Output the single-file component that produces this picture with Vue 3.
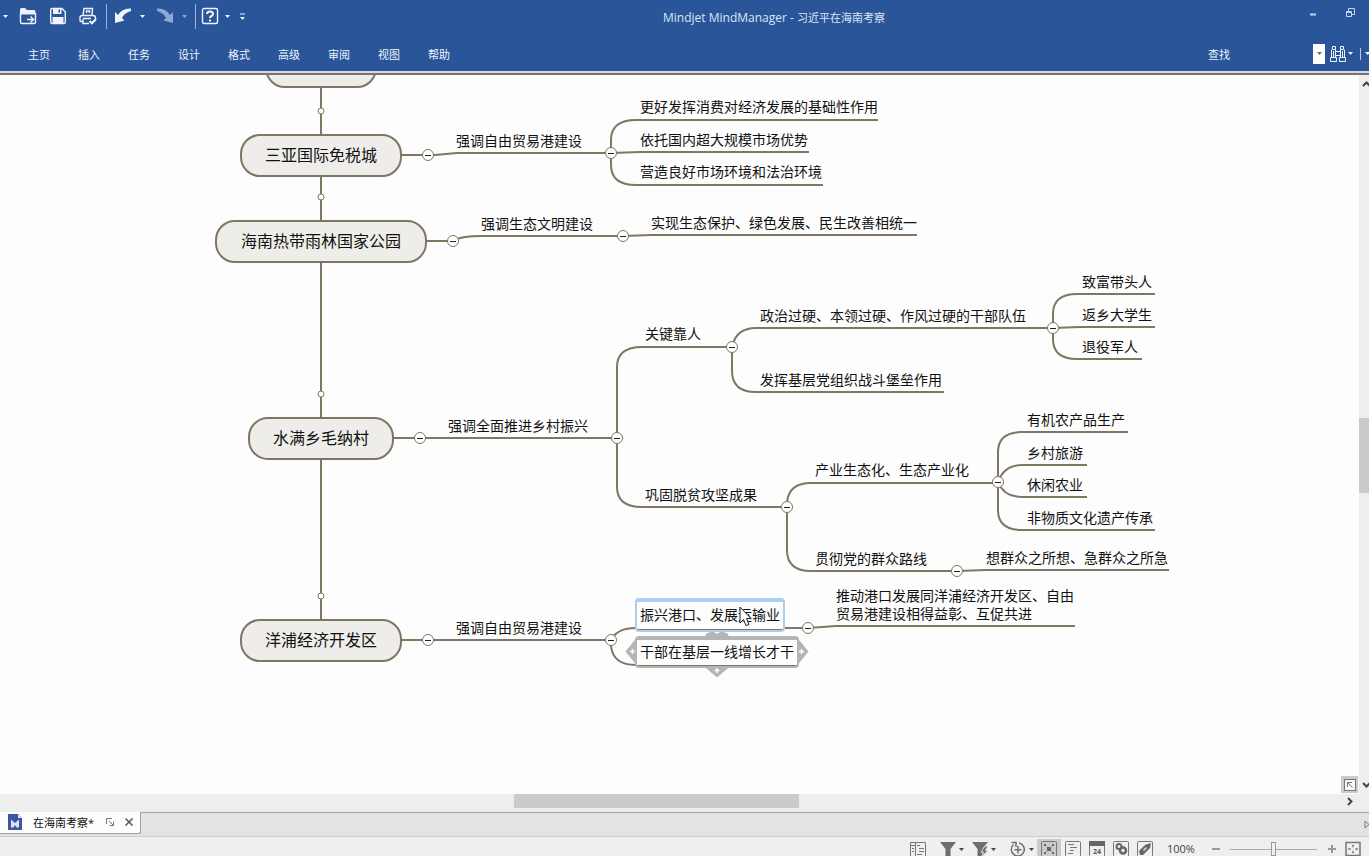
<script setup>
import { ref } from 'vue'

const zoom = ref(55)
const query = ref('')
const menus = ['主页', '插入', '任务', '设计', '格式', '高级', '审阅', '视图', '帮助']

/* Map coordinates; the board is scrolled down by originY. */
const originY = 75

const mains = [
  { text: '', x: 265, y: 45, w: 112 },
  { text: '三亚国际免税城', x: 240, y: 134, w: 162 },
  { text: '海南热带雨林国家公园', x: 215, y: 220, w: 212 },
  { text: '水满乡毛纳村', x: 248, y: 417, w: 146 },
  { text: '洋浦经济开发区', x: 240, y: 619, w: 162 }
]

/* y is the vertical centre of the topic's first line. */
const topics = [
  { text: '强调自由贸易港建设', x: 456, y: 141 },
  { text: '更好发挥消费对经济发展的基础性作用', x: 640, y: 107 },
  { text: '依托国内超大规模市场优势', x: 640, y: 140 },
  { text: '营造良好市场环境和法治环境', x: 640, y: 172 },
  { text: '强调生态文明建设', x: 481, y: 224 },
  { text: '实现生态保护、绿色发展、民生改善相统一', x: 651, y: 223 },
  { text: '强调全面推进乡村振兴', x: 448, y: 426 },
  { text: '关键靠人', x: 645, y: 334 },
  { text: '政治过硬、本领过硬、作风过硬的干部队伍', x: 760, y: 316 },
  { text: '致富带头人', x: 1082, y: 282 },
  { text: '返乡大学生', x: 1082, y: 315 },
  { text: '退役军人', x: 1082, y: 347 },
  { text: '发挥基层党组织战斗堡垒作用', x: 760, y: 380 },
  { text: '巩固脱贫攻坚成果', x: 645, y: 495 },
  { text: '产业生态化、生态产业化', x: 815, y: 470 },
  { text: '有机农产品生产', x: 1027, y: 420 },
  { text: '乡村旅游', x: 1027, y: 453 },
  { text: '休闲农业', x: 1027, y: 485 },
  { text: '非物质文化遗产传承', x: 1027, y: 518 },
  { text: '贯彻党的群众路线', x: 815, y: 559 },
  { text: '想群众之所想、急群众之所急', x: 986, y: 558 },
  { text: '强调自由贸易港建设', x: 456, y: 628 },
  { text: '推动港口发展同洋浦经济开发区、自由\n贸易港建设相得益彰、互促共进', x: 836, y: 596 }
]

const links = [
  'M321 87V134M321 177V220M321 263V417M321 460V619',
  'M402 155H435L457 153H611',
  'M611 153V140Q611 120 636 120H878',
  'M611 153L640 152H809',
  'M611 153V165Q611 185 636 185H823',
  'M427 241H453Q460 236 482 236H623',
  'M623 236L652 235H917',
  'M394 438H617',
  'M617 438V367Q617 347 642 347H732',
  'M617 438V487Q617 507 642 507H787',
  'M732 347Q736 328 756 328H1053',
  'M732 347V371Q732 392 756 392H944',
  'M1053 328V314Q1053 294 1077 294H1155',
  'M1053 328L1080 327H1155',
  'M1053 328V339Q1053 359 1077 359H1142',
  'M787 507V502Q789 483 811 483H998',
  'M787 507V550Q787 571 811 571H957',
  'M998 482V452Q998 432 1022 432H1128',
  'M998 482Q1004 465 1022 465H1087',
  'M998 482Q1004 497 1022 497H1087',
  'M998 482V510Q998 530 1022 530H1155',
  'M957 571L986 570H1169',
  'M402 640H611',
  'M611 640Q617 628 636 628H808',
  'M611 640V646Q613 665 636 665H640',
  'M808 628L836 626H1075'
]

const dots = [111, 197, 394, 596]

const toggles = [
  [428, 155], [611, 153], [453, 241], [623, 236], [420, 438], [617, 438], [732, 347],
  [1053, 328], [787, 507], [998, 482], [957, 571], [428, 640], [611, 640], [808, 628]
]

const vThumb = { top: '47.7%', height: '10.4%' }
const hThumb = { left: '37.55%', width: '20.8%' }
</script>

<template>
  <div class="app">
    <header class="header">
      <div class="title-row">
        <div class="quick">
          <button class="car first" aria-label="更多"><svg width="5" height="3"><path d="M0 0H5L2.500 3Z" fill="currentColor" /></svg></button>
          <button class="tool" aria-label="打开">
            <svg width="18" height="18" viewBox="0 0 18 18"><path d="M1 2.500Q1 1 2.500 1H6L8 3H15Q16.500 3 16.500 5V7.500H1Z" fill="currentColor" /><path d="M1.500 6V15Q1.500 16.500 3 16.500H15Q16.500 16.500 16.500 15V6M8 12.500H14M11.500 9.500L14.500 12.500L11.500 15.500" fill="none" stroke="currentColor" stroke-width="1.400" /></svg>
          </button>
          <button class="tool" aria-label="保存">
            <svg width="18" height="18" viewBox="0 0 18 18"><path d="M1.700 3Q1.700 1.500 3 1.500H13L16.300 5V15Q16.300 16.500 15 16.500H3Q1.700 16.500 1.700 15Z" fill="none" stroke="currentColor" stroke-width="1.400" /><path d="M4 1H12.500V7H4ZM3.500 10H14.500V16H3.500Z" fill="currentColor" /><path d="M9.500 2.500H11V5.500H9.500Z" fill="#2a5699" /></svg>
          </button>
          <button class="tool" aria-label="打印">
            <svg width="18" height="18" viewBox="0 0 18 18" fill="none" stroke="currentColor" stroke-width="1.400"><path d="M4 8L5 1.500H13.500L13 8M7.500 6V4H10.500V6M3.500 8.500H14Q16.500 8.500 16.500 11V12M3.500 14.500H2Q1 14.500 1 13V10.500Q1 8.500 3.500 8.500M4 11.500H12M4 12V16.500H10" /><path d="M10.500 14L13 16.300L17 12" stroke-width="2" /></svg>
          </button>
          <span class="bar"></span>
          <button class="tool" aria-label="撤消">
            <svg width="18" height="18" viewBox="0 0 18 18"><path d="M1 5L1 16L10.500 13.500L8 11Q10 6 17 4V1.500Q8 1 4 8Z" fill="currentColor" /></svg>
          </button>
          <button class="car" aria-label="撤消列表"><svg width="5" height="3"><path d="M0 0H5L2.500 3Z" fill="currentColor" /></svg></button>
          <button class="tool dim" aria-label="重做">
            <svg width="18" height="18" viewBox="0 0 18 18"><path d="M17 5V16L7.500 13.500L10 11Q8 6 1 4V1.500Q10 1 14 8Z" fill="currentColor" /></svg>
          </button>
          <button class="car dim" aria-label="重做列表"><svg width="5" height="3"><path d="M0 0H5L2.500 3Z" fill="currentColor" /></svg></button>
          <span class="bar"></span>
          <button class="tool help" aria-label="帮助">
            <svg width="18" height="18" viewBox="0 0 18 18" fill="none" stroke="currentColor"><rect x="1.500" y="1.500" width="15" height="15" rx="1.500" stroke-width="1.400" /><path d="M6 7Q6 4.500 9 4.500T12 7Q12 8.500 10.500 9T9 11M9 12.500V14.500" stroke-width="2" /></svg>
          </button>
          <button class="car near" aria-label="帮助列表"><svg width="5" height="3"><path d="M0 0H5L2.500 3Z" fill="currentColor" /></svg></button>
          <button class="car custom" aria-label="自定义工具栏"><svg width="5" height="7"><path d="M0 1H5" stroke="currentColor" /><path d="M0 4H5L2.500 7Z" fill="currentColor" /></svg></button>
        </div>
        <h1 class="title"><span class="product">Mindjet MindManager - </span>习近平在海南考察</h1>
        <div class="window-controls">
          <button aria-label="最小化"><svg width="9" height="9"><path d="M1 6.500H7" stroke="currentColor" stroke-width="2" /></svg></button>
          <button aria-label="还原"><svg width="9" height="9" fill="none" stroke="currentColor"><path d="M.5 3.500H5.500V8.500H.5ZM2.500 3V.5H8.500V6.500H6M.5 4.500H5.500" /></svg></button>
        </div>
      </div>
      <div class="menu-row">
        <nav class="menus">
          <button v-for="m in menus" :key="m">{{ m }}</button>
        </nav>
        <div class="search">
          <label for="find">查找</label>
          <input id="find" v-model="query" type="text">
          <button class="drop" aria-label="查找历史"><svg width="5" height="3"><path d="M0 0H5L2.500 3Z" fill="#6b6b6b" /></svg></button>
          <button class="binoculars" aria-label="开始查找">
            <svg width="16" height="18" viewBox="0 0 16 18" fill="none" stroke="currentColor"><path d="M2.500 1.500H5.500V4.500H2.500ZM10.500 1.500H13.500V4.500H10.500ZM1.500 4.500V12.500M5.500 4.500V12.500M10.500 4.500V12.500M14.500 4.500V12.500M.5 12.500H6.500V16.500H.5ZM9.500 12.500H15.500V16.500H9.500ZM5.500 6.500H10.500M5.500 10.500H10.500M3.500 6V12M12.500 6V12" /></svg>
          </button>
          <button class="car" aria-label="查找选项"><svg width="5" height="3"><path d="M0 0H5L2.500 3Z" fill="currentColor" /></svg></button>
          <span class="small-bar"></span>
          <button class="car" aria-label="更多选项"><svg width="5" height="3"><path d="M0 0H5L2.500 3Z" fill="currentColor" /></svg></button>
        </div>
      </div>
    </header>

    <main class="work">
      <section class="board" aria-label="思维导图">
        <svg class="links" width="100%" height="100%">
          <g :transform="`translate(0 ${-originY})`">
            <path v-for="d in links" :key="d" :d="d" />
            <circle v-for="y in dots" :key="y" cx="321" :cy="y" r="3" />
          </g>
        </svg>
        <div v-for="m in mains" :key="m.x + '-' + m.y" class="main-topic" :style="{ left: m.x + 'px', top: m.y - originY + 'px', width: m.w + 'px' }">{{ m.text }}</div>
        <div v-for="t in topics" :key="t.x + '-' + t.y" class="topic" :style="{ left: t.x + 'px', top: t.y - 9 - originY + 'px' }">{{ t.text }}</div>
        <button v-for="t in toggles" :key="t[0] + '-' + t[1]" class="toggle" aria-label="折叠" :style="{ left: t[0] - 6 + 'px', top: t[1] - 6 - originY + 'px' }"></button>

        <svg class="handles" width="184" height="52" viewBox="0 0 184 52">
          <path d="M1 25.500L12 12V39ZM183 25.500L172 12V39ZM92 51L78 39H106Z" fill="#b5b5b5" stroke="#b5b5b5" stroke-linejoin="round" />
          <path d="M80 12Q80 6 87 6H89Q92 9 95 6H97Q104 6 104 12Z" fill="#b5b5b5" />
          <path d="M5 25.500H10M7.500 23V28M174 25.500H179M176.500 23V28M89.500 44.500H94.500M92 42V47" stroke="#fff" stroke-width="1.500" />
        </svg>
        <div class="picked hover">振兴港口、发展运输业</div>
        <div class="picked current">干部在基层一线增长才干</div>
        <svg class="pointer" width="13" height="21" viewBox="0 0 13 21"><path d="M1 1V17L4.500 13.500L7 19.500L10 18.500L7.500 12.500H12Z" fill="#fff" stroke="#222" /></svg>
        <button class="overview" aria-label="概览">
          <svg width="12" height="12" fill="none" stroke="#777"><rect x=".5" y=".5" width="11" height="11" /><path d="M3.500 8V3.500H8M3.500 3.500L8.500 8.500" /></svg>
        </button>
      </section>
      <div class="vscroll">
        <div class="vthumb" :style="vThumb"></div>
        <button class="up" aria-label="向上"><svg width="8" height="6"><path d="M1 5L4.500 1.500L8 5" /></svg></button>
        <button class="down" aria-label="向下"><svg width="8" height="6"><path d="M1 1L4.500 4.500L8 1" /></svg></button>
      </div>
    </main>

    <div class="hscroll">
      <div class="hthumb" :style="hThumb"></div>
      <button aria-label="向右"><svg width="6" height="9"><path d="M1 1L4.500 4.500L1 8" /></svg></button>
    </div>

    <div class="tabs">
      <div class="tab">
        <svg width="14" height="16" viewBox="0 0 14 16"><path d="M0 0H10L14 4V16H0Z" fill="#3c55a5" /><path d="M10 0L14 4H10Z" fill="#dfe5f5" /><path d="M3 13.500V5.500L7 9L11 5.500V13.500H8.500L7 11L5.500 13.500Z" fill="#dce4f3" /></svg>
        <span class="name">在海南考察*</span>
        <button aria-label="弹出窗口"><svg width="8" height="8" fill="none" stroke="#777"><path d="M.5 6V.5H6M3 3L7 7M7.500 3.500V7.500H3.500" /></svg></button>
        <button aria-label="关闭"><svg width="8" height="8" stroke="#555" stroke-width="1.500"><path d="M.5 .5L7.500 7.500M7.500 .5L.5 7.500" /></svg></button>
      </div>
      <button class="next" aria-label="下一个标签"><svg width="5" height="9" fill="none" stroke="#777"><path d="M1 1L5 4.500L1 8Z" /></svg></button>
    </div>

    <footer class="status">
      <div class="items">
        <button aria-label="大纲"><svg width="16" height="16" fill="none" stroke="#777"><path d="M.5 1.500H15.500V15.500H.5ZM5.500 1V15.500M1 4.500H5M2 7.500H4M2 10.500H4M7 4.500H10M9 7.500H14M9 10.500H14M7 13.500H12" /></svg></button>
        <button class="split gap-l" aria-label="筛选">
          <svg width="16" height="16"><path d="M0 1H16L10.500 8V16H5.500V8Z" fill="#6e6e6e" /></svg><svg width="5" height="3"><path d="M0 0H5L2.500 3Z" fill="#444" /></svg>
        </button>
        <button class="split gap-m" aria-label="快速筛选">
          <svg width="16" height="16"><path d="M0 1H16L11 7L10.500 16H5.500V8Z" fill="#6e6e6e" /><path d="M13 5L9 11H11.500L9.500 16L16 9.500H13.500L16 5Z" fill="#6e6e6e" stroke="#efefef" stroke-width=".8" /></svg><svg width="5" height="3"><path d="M0 0H5L2.500 3Z" fill="#444" /></svg>
        </button>
        <button class="split gap-l" aria-label="添加">
          <svg width="16" height="16" fill="none" stroke="#6e6e6e"><path d="M3.500 3.500A6.500 6.500 0 1 0 9 2M8 5V12.500M4.500 8.800H11.500" stroke-width="1.500" /><path d="M1.500 1.500H6V6" stroke-width="1.500" /></svg><svg width="5" height="3"><path d="M0 0H5L2.500 3Z" fill="#444" /></svg>
        </button>
        <div class="views">
          <button class="active" aria-label="导图视图"><svg width="16" height="16" fill="none" stroke="#777"><rect x=".5" y=".5" width="15" height="15" rx="1" /><path d="M6 6H10V10H6ZM3 3H5V5H3ZM11 3H13V5H11ZM3 11H5V13H3ZM11 11H13V13H11Z" fill="#666" stroke="none" /><path d="M4 4L6 6M12 4L10 6M4 12L6 10M12 12L10 10" stroke-dasharray="1 1" /></svg></button>
          <button aria-label="大纲视图"><svg width="16" height="16" fill="none" stroke="#777"><rect x=".5" y=".5" width="15" height="15" rx="1" /><path d="M3 3.500H9M5 6.500H12M5 9.500H9M3 12.500H8" /></svg></button>
          <button aria-label="日程视图"><svg width="16" height="16" fill="none"><rect x=".5" y=".5" width="15" height="15" rx="1" stroke="#777" /><path d="M0 0H16V5H0Z" fill="#666" /><text x="8" y="13" text-anchor="middle">24</text></svg></button>
          <button aria-label="链接视图"><svg width="16" height="16" fill="none"><rect x=".5" y=".5" width="15" height="15" rx="1" stroke="#777" /><circle cx="6" cy="5.500" r="2.500" stroke="#666" stroke-width="2" /><circle cx="10" cy="9.500" r="3" fill="#efefef" stroke="#666" stroke-width="2.500" /></svg></button>
          <button aria-label="标签视图"><svg width="16" height="16" fill="none"><rect x=".5" y=".5" width="15" height="15" rx="1" stroke="#777" /><path d="M2 10L8 4L14 2L13 7L6 14H3Z" fill="#666" /><path d="M6.500 9.500L9.500 6.500" stroke="#efefef" stroke-width="1.200" /></svg></button>
        </div>
        <output class="percent" for="zoom">100%</output>
        <button class="minus" aria-label="缩小"><svg width="10" height="10"><path d="M1 5H9" /></svg></button>
        <input id="zoom" v-model="zoom" type="range" min="0" max="110" aria-label="缩放">
        <button class="plus" aria-label="放大"><svg width="10" height="10"><path d="M1 5H9M5 1V9" /></svg></button>
        <button class="fit" aria-label="适合窗口"><svg width="16" height="16" fill="none" stroke="#777"><path d="M1 1.500H15V14.500H1Z" stroke-width="1.500" /><path d="M8 4V6.500M8 9.500V12M3.500 8H6M10 8H12.500M7 5L8 4L9 5M7 11L8 12L9 11M4.500 7L3.500 8L4.500 9M11.500 7L12.500 8L11.500 9" /></svg></button>
      </div>
    </footer>
  </div>
</template>

<style>
html,
body {
  margin: 0;
  overflow: hidden;
}
</style>

<style scoped>
.app {
  display: flex;
  flex-direction: column;
  height: 100vh;
  overflow: hidden;
  background: #eeeeee;
  color: #111;
  font-family: "Open Sans", "Noto Sans CJK SC", sans-serif;
  font-size: 11px;
}
button {
  display: flex;
  align-items: center;
  justify-content: center;
  flex: none;
  padding: 0;
  border: 0;
  background: none;
  color: inherit;
  font: inherit;
}
svg {
  display: block;
  flex: none;
}

.header {
  flex: none;
  background: #2a5699;
  color: #eef4ff;
  border-bottom: 2px solid #d5d9e6;
  box-shadow: 0 2px 0 #77736f;
  margin-bottom: 2px;
}
.title-row {
  display: flex;
  height: 36px;
}
.quick {
  display: flex;
  align-items: center;
  height: 32px;
}
.tool {
  width: 30px;
}
.car {
  justify-content: flex-start;
  width: 12px;
  height: 20px;
  padding-left: 2px;
}
.car.first {
  width: 13px;
  padding-left: 3px;
}
.help {
  width: 26px;
}
.car.near,
.car.custom {
  width: 15px;
}
.dim {
  color: #8ea9d4;
}
.bar {
  width: 1px;
  height: 25px;
  margin: 0 1px 0 3px;
  background: #9fb4d8;
}
.title {
  flex: 1;
  margin: 0;
  font-size: 11px;
  font-weight: 400;
  line-height: 36px;
  text-align: center;
  color: #dbe5f6;
}
.product {
  font-size: 12px;
}
.window-controls {
  display: flex;
  align-items: center;
  height: 24px;
  color: #c5d3eb;
}
.window-controls button {
  width: 37px;
}
.menu-row {
  display: flex;
  justify-content: space-between;
  align-items: center;
  height: 35px;
}
.menus {
  display: flex;
  padding-left: 14px;
}
.menus button {
  width: 50px;
  height: 24px;
}
.search {
  display: flex;
  align-items: center;
}
.search input {
  width: 77px;
  height: 20px;
  margin-left: 6px;
  padding: 0;
  border: 0;
  background: transparent;
  color: inherit;
  font: inherit;
}
.drop {
  width: 12px;
  height: 20px;
  background: #fff;
}
.binoculars {
  margin-left: 5px;
}
.search .car {
  width: 10px;
}
.small-bar {
  width: 1px;
  height: 12px;
  margin: 0 2px 0 4px;
  background: #b9c8e2;
}
.search .car:last-child {
  width: 6px;
  overflow: hidden;
}

.work {
  display: flex;
  flex: 1;
  min-height: 0;
}
.board {
  position: relative;
  flex: 1;
  overflow: hidden;
  background: #fdfdfd;
}
.links {
  position: absolute;
  inset: 0;
}
.links path {
  fill: none;
  stroke: #7f7663;
  stroke-width: 2;
}
.links circle {
  fill: #fff;
  stroke: #7f7663;
}
.main-topic {
  position: absolute;
  box-sizing: border-box;
  height: 43px;
  border: 2px solid #7f7663;
  border-radius: 20px;
  background: #eeedea;
  font-size: 16px;
  line-height: 39px;
  text-align: center;
  white-space: nowrap;
}
.topic {
  position: absolute;
  font-size: 14px;
  line-height: 18px;
  white-space: pre;
}
.toggle {
  position: absolute;
  box-sizing: border-box;
  width: 12px;
  height: 12px;
  border: 1px solid #7f7663;
  border-radius: 50%;
  background: #fff;
}
.toggle::before {
  content: "";
  width: 6px;
  height: 1px;
  background: #222;
}
.picked {
  position: absolute;
  left: 635px;
  box-sizing: border-box;
  padding: 0 3px;
  border: 2px solid #b5b5b5;
  border-top-width: 4px;
  border-radius: 4px;
  background: linear-gradient(#7f7663, #7f7663) bottom / 100% 1px no-repeat #fdfdfd;
  font-size: 14px;
  white-space: nowrap;
}
.hover {
  top: 523px;
  height: 34px;
  border-color: #abcff2;
  line-height: 25px;
}
.current {
  top: 561px;
  height: 32px;
  line-height: 23px;
}
.handles {
  position: absolute;
  left: 625px;
  top: 551px;
}
.pointer {
  position: absolute;
  left: 739px;
  top: 531px;
}
.overview {
  position: absolute;
  right: 1px;
  bottom: 1px;
  width: 17px;
  height: 17px;
  background: #cbcbcb;
}
.overview svg {
  background: #f7f7f7;
}
.vscroll {
  position: relative;
  flex: none;
  width: 10px;
  overflow: hidden;
  background: #eeeeee;
}
.vthumb {
  position: absolute;
  left: 0;
  right: 0;
  background: #cbcbcb;
}
.vscroll button {
  position: absolute;
  right: -1px;
}
.up {
  top: 6px;
}
.down {
  bottom: 6px;
}
.vscroll path,
.hscroll path {
  fill: none;
  stroke: #444;
  stroke-width: 2;
}
.hscroll {
  position: relative;
  display: flex;
  flex: none;
  align-items: center;
  justify-content: flex-end;
  height: 18px;
  box-sizing: border-box;
  padding: 0 16px 3px 0;
}
.hthumb {
  position: absolute;
  top: 0;
  height: 14px;
  background: #cbcbcb;
}

.tabs {
  display: flex;
  flex: none;
  justify-content: space-between;
  box-sizing: border-box;
  height: 25px;
  border-top: 1px solid #a3a3a3;
  border-bottom: 1px solid #cecece;
  background: #e3e3e3;
}
.tab {
  display: flex;
  align-items: center;
  box-sizing: border-box;
  height: 22px;
  margin-top: -1px;
  padding: 0 7px 1px 8px;
  border-right: 1px solid #a3a3a3;
  border-bottom: 1px solid #a3a3a3;
  border-radius: 0 0 3px 0;
  background: #fdfdfd;
}
.name {
  margin: 0 12px 0 11px;
}
.tab button + button {
  margin-left: 11px;
}
.status {
  flex: 0 0 19px;
  overflow: hidden;
  background: #efefef;
}
.items {
  display: flex;
  align-items: center;
  justify-content: flex-end;
  height: 24px;
  padding-right: 8px;
}
.split {
  gap: 3px;
}
.gap-l {
  margin-left: 14px;
}
.gap-m {
  margin-left: 8px;
}
.views {
  display: flex;
  margin-left: 3px;
}
.views button {
  width: 24px;
  height: 20px;
}
.views .active {
  background: #cacaca;
}
.views text {
  fill: #555;
  font-size: 7px;
  font-weight: 700;
}
.percent {
  width: 28px;
  margin-left: 10px;
  line-height: 22px;
  color: #444;
}
.minus {
  margin-left: 16px;
}
.minus path,
.plus path {
  stroke: #999;
  stroke-width: 2;
}
.items input {
  appearance: none;
  width: 87px;
  height: 16px;
  margin: 0 10px 0 9px;
  background: linear-gradient(#aaa, #aaa) center / 100% 1px no-repeat;
}
.items input::-webkit-slider-thumb {
  appearance: none;
  box-sizing: border-box;
  width: 5px;
  height: 14px;
  border: 1px solid #999;
  background: #efefef;
}
.fit {
  margin-left: 8px;
}
</style>
